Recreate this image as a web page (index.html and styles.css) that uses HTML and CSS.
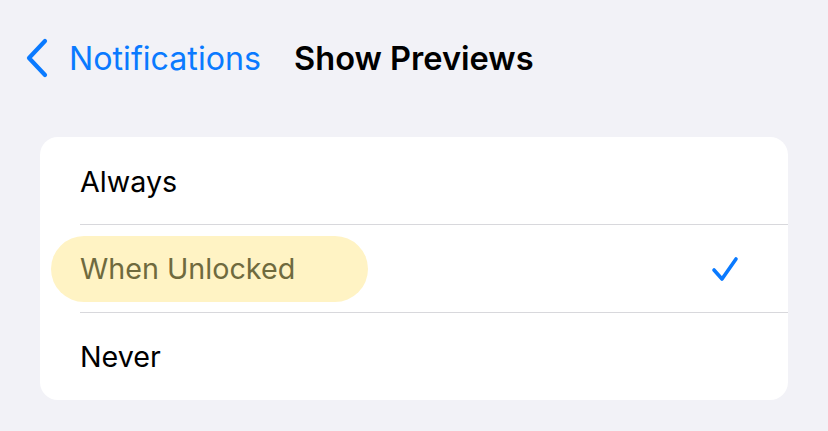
FILE: index.html
```html
<!DOCTYPE html>
<html>
<head>
<meta charset="utf-8">
<link rel="stylesheet" href="styles.css">
</head>
<body>
<header class="nav">
  <a class="back">
    <svg class="chev" width="24" height="40" viewBox="0 0 24 40"><path d="M20 3 L4 20 L20 37" fill="none" stroke="#0a7aff" stroke-width="4.2" stroke-linecap="round" stroke-linejoin="round"/></svg>
    <span class="back-label">Notifications</span>
  </a>
  <h1 class="title">Show Previews</h1>
</header>
<main class="list">
  <div class="row"><span class="label">Always</span></div>
  <div class="row"><span class="label hl">When Unlocked</span>
    <svg class="check" width="28" height="27" viewBox="0 0 28 27"><path d="M3 15 L11 24 L25 4" fill="none" stroke="#0a7aff" stroke-width="3.6" stroke-linecap="round" stroke-linejoin="round"/></svg>
  </div>
  <div class="row"><span class="label">Never</span></div>
</main>
</body>
</html>
```
FILE: styles.css
```css
html, body {
  margin: 0;
  padding: 0;
  background: #f2f2f7;
  font-family: Inter, "Noto Sans", sans-serif;
  width: 828px;
  height: 431px;
  overflow: hidden;
}
.nav {
  display: flex;
  align-items: center;
  height: 116px;
  padding-left: 25px;
  box-sizing: border-box;
}
.back {
  display: flex;
  align-items: center;
  color: #0a7aff;
  font-size: 32.2px;
  gap: 20px;
}
.chev { display: block; }
.title {
  margin: 0 0 0 33px;
  font-size: 32.6px;
  font-weight: 600;
  color: #000;
}
.list {
  margin: 21px 40px 0 40px;
  background: #fff;
  border-radius: 18px;
  overflow: hidden;
}
.row {
  height: 88px;
  display: flex;
  align-items: center;
  justify-content: space-between;
  padding: 1px 49px 0 40px;
  box-sizing: border-box;
  position: relative;
  font-size: 28.7px;
  color: #000;
}
.row + .row::before {
  content: "";
  position: absolute;
  top: 0;
  left: 40px;
  right: 0;
  border-top: 1px solid #d8d8dc;
}
.row:first-child { height: 87px; }
.hl {
  background: #fff3c4;
  color: #6f6a3e;
  height: 66px;
  line-height: 66px;
  border-radius: 33px;
  padding: 0 73px 0 29px;
  margin-left: -29px;
}
.check { display: block; }
```
